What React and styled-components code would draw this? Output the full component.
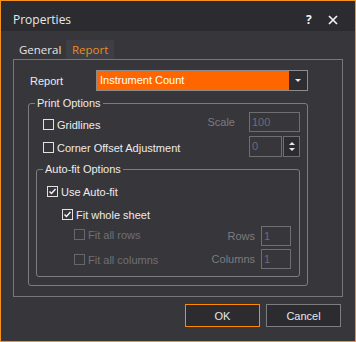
import React from 'react'
import styled, { createGlobalStyle } from 'styled-components'

const GlobalStyle = createGlobalStyle`
  html, body { margin: 0; padding: 0; background: #37363b; }
  * { box-sizing: border-box; }
`

function CloseIcon() {
  return (
    <svg width="10" height="10" viewBox="0 0 10 10">
      <path d="M1 1 L9 9 M9 1 L1 9" stroke="#f2f2f2" strokeWidth="1.7" fill="none" />
    </svg>
  )
}

function CheckMark() {
  return (
    <svg width="9" height="9" viewBox="0 0 9 9">
      <path d="M1.5 4.5 L3.5 6.5 L7.5 2" stroke="#f2f2f2" strokeWidth="1.5" fill="none" />
    </svg>
  )
}

function CheckItem({ label, checked, disabled, top = 0, indent = 0 }) {
  return (
    <Check $top={top} $indent={indent} $disabled={disabled}>
      <Box $disabled={disabled}>{checked && <CheckMark />}</Box>
      <span>{label}</span>
    </Check>
  )
}

function Properties() {
  return (
    <Window>
      <TitleBar>
        <Title>Properties</Title>
        <Help>?</Help>
        <CloseIcon />
      </TitleBar>

      <Body>
        <Tabs>
          <Tab $w={53}>General</Tab>
          <Tab $w={48} $active>Report</Tab>
        </Tabs>

        <TabPanel>
          <ReportRow>
            <FieldLabel>Report</FieldLabel>
            <Select>
              <SelectText>Instrument Count</SelectText>
              <SelectArrow><Caret $down /></SelectArrow>
            </Select>
          </ReportRow>

          <GroupBox $mt={6} $ml={14} $w={280}>
            <Legend>Print Options</Legend>
            <GroupContent $pad="2px 7px 8px 7px">
              <OptionRow $h={20} $mt={0}>
                <CheckItem label="Gridlines" top={7} indent={7} />
                <Side $gap={14}>
                  <SideLabel>Scale</SideLabel>
                  <Field $w={51} $h={20}>100</Field>
                </Side>
              </OptionRow>
              <OptionRow $h={21} $mt={4}>
                <CheckItem label="Corner Offset Adjustment" top={6} indent={7} />
                <Side $gap={1}>
                  <Field $w={33} $h={21}>0</Field>
                  <Spinner>
                    <Caret />
                    <Caret $down />
                  </Spinner>
                </Side>
              </OptionRow>

              <GroupBox $mt={6}>
                <Legend>Auto-fit Options</Legend>
                <GroupContent $pad="0 8px 7px 10px">
                  <CheckItem label="Use Auto-fit" checked top={10} />
                  <CheckItem label="Fit whole sheet" checked top={12} indent={15} />
                  <OptionRow $h={20} $mt={6}>
                    <CheckItem label="Fit all rows" disabled top={3} indent={27} />
                    <Side $gap={6}>
                      <SideLabel>Rows</SideLabel>
                      <Field $w={30} $h={20}>1</Field>
                    </Side>
                  </OptionRow>
                  <OptionRow $h={20} $mt={3}>
                    <CheckItem label="Fit all columns" disabled top={5} indent={27} />
                    <Side $gap={6}>
                      <SideLabel>Columns</SideLabel>
                      <Field $w={30} $h={20}>1</Field>
                    </Side>
                  </OptionRow>
                </GroupContent>
              </GroupBox>
            </GroupContent>
          </GroupBox>
        </TabPanel>

        <Footer>
          <Button $primary>OK</Button>
          <Button>Cancel</Button>
        </Footer>
      </Body>
    </Window>
  )
}

export default function App() {
  return (
    <>
      <GlobalStyle />
      <Properties />
    </>
  )
}

const Window = styled.div`
  width: 356px;
  height: 342px;
  border: 1px solid #f5921e;
  background: #37363b;
  display: flex;
  flex-direction: column;
  font-family: 'Liberation Sans', Arial, sans-serif;
  font-size: 11px;
  color: #ececec;
`

const TitleBar = styled.div`
  height: 30px;
  flex: none;
  background: #2c2c30;
  display: flex;
  align-items: center;
  padding: 7px 17px 0 12px;
`

const Title = styled.span`
  flex: 1;
  font-family: 'Open Sans', sans-serif;
  font-size: 12px;
  color: #e8e8e8;
`

const Help = styled.span`
  width: 22px;
  font-family: 'Open Sans', sans-serif;
  font-size: 12px;
  font-weight: 700;
  color: #f2f2f2;
`

const Body = styled.div`
  flex: 1;
  padding: 9px 12px 0;
  display: flex;
  flex-direction: column;
`

const Tabs = styled.div`
  display: flex;
  height: 19px;
`

const Tab = styled.div`
  width: ${p => p.$w}px;
  padding-left: 6px;
  line-height: 19px;
  font-family: 'Open Sans', sans-serif;
  font-size: 11.5px;
  color: ${p => (p.$active ? '#ec8c22' : '#e4e4e4')};
  background: ${p => (p.$active ? '#3f3e44' : 'transparent')};
`

const TabPanel = styled.div`
  height: 238px;
  border: 1px solid #77777b;
  padding-top: 10px;
`

const ReportRow = styled.div`
  display: flex;
  align-items: center;
  height: 21px;
  padding-left: 16px;
`

const FieldLabel = styled.span`
  width: 66px;
`

const Select = styled.div`
  width: 212px;
  height: 21px;
  border: 1px solid #8d8d8d;
  background: #ff6600;
  display: flex;
`

const SelectText = styled.span`
  flex: 1;
  padding-left: 3px;
  line-height: 19px;
  color: #ffffff;
`

const SelectArrow = styled.span`
  width: 18px;
  background: #2e2e32;
  display: flex;
  align-items: center;
  justify-content: center;
`

const Caret = styled.span`
  width: 0;
  height: 0;
  border-left: 3px solid transparent;
  border-right: 3px solid transparent;
  ${p => (p.$down ? 'border-top: 3px solid #e8e8e8;' : 'border-bottom: 3px solid #e8e8e8;')}
`

const GroupBox = styled.fieldset`
  margin: ${p => p.$mt}px 0 0 ${p => p.$ml || 0}px;
  width: ${p => (p.$w ? `${p.$w}px` : 'auto')};
  padding: 0;
  min-width: 0;
  border: 1px solid #7d7d80;
  border-radius: 3px;
`

const Legend = styled.legend`
  margin-left: 6px;
  padding: 0 2px;
  line-height: 13px;
  font-size: 11px;
  color: #ececec;
`

const GroupContent = styled.div`
  padding: ${p => p.$pad};
  display: flex;
  flex-direction: column;
  align-items: stretch;
`

const OptionRow = styled.div`
  display: flex;
  align-items: flex-start;
  height: ${p => p.$h}px;
  margin-top: ${p => p.$mt}px;
`

const Check = styled.div`
  display: flex;
  align-items: center;
  gap: 3px;
  height: 11px;
  margin-top: ${p => p.$top}px;
  margin-left: ${p => p.$indent}px;
  color: ${p => (p.$disabled ? '#707075' : '#ececec')};
`

const Box = styled.span`
  width: 11px;
  height: 11px;
  flex: none;
  border: 1px solid ${p => (p.$disabled ? '#67676b' : '#e2e2e2')};
  display: flex;
  align-items: center;
  justify-content: center;
`

const Side = styled.div`
  margin-left: auto;
  display: flex;
  align-items: center;
  gap: ${p => p.$gap}px;
`

const SideLabel = styled.span`
  color: #7c7c80;
`

const Field = styled.div`
  width: ${p => p.$w}px;
  height: ${p => p.$h}px;
  border: 1px solid #6f6f73;
  padding-left: 2px;
  line-height: ${p => p.$h - 2}px;
  color: #6c6c78;
`

const Spinner = styled.div`
  width: 17px;
  height: 21px;
  border: 1px solid #6f6f73;
  background: #2d2d31;
  display: flex;
  flex-direction: column;
  align-items: center;
  justify-content: center;
  gap: 3px;
`

const Footer = styled.div`
  display: flex;
  justify-content: flex-end;
  gap: 6px;
  margin-top: 7px;
  padding-right: 2px;
`

const Button = styled.button`
  width: 75px;
  height: 23px;
  padding: 0;
  background: #2c2c30;
  border: 1px solid ${p => (p.$primary ? '#ff8a00' : '#7d7d80')};
  color: #e8e8e8;
  font-family: 'Liberation Sans', Arial, sans-serif;
  font-size: 11px;
`
